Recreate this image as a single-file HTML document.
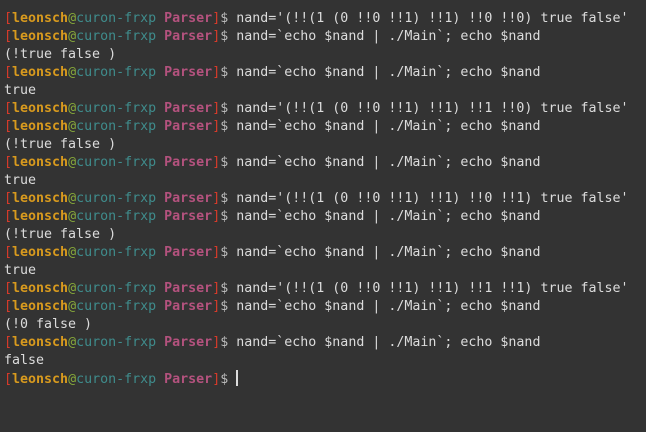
<html><head><style>
body{margin:0;background:#333333;width:646px;height:432px;overflow:hidden}
pre{margin:0;padding:10px 0 0 4px;font-family:"DejaVu Sans Mono",monospace;font-size:13.3px;line-height:18px;color:#dcdcdc}
.r{color:#d63a2a}.u{color:#d89a1e;font-weight:bold}.a{color:#86a83a}.h{color:#3f8c8c}.p{color:#b4527e;font-weight:bold}.d{color:#bbb}
.cur{display:inline-block;width:2px;height:16px;background:#ddd;vertical-align:-3px}
</style></head><body><pre><span class="r">[</span><span class="u">leonsch</span><span class="a">@</span><span class="h">curon-frxp</span> <span class="p">Parser</span><span class="r">]</span><span class="d">$</span> nand='(!!(1 (0 !!0 !!1) !!1) !!0 !!0) true false'
<span class="r">[</span><span class="u">leonsch</span><span class="a">@</span><span class="h">curon-frxp</span> <span class="p">Parser</span><span class="r">]</span><span class="d">$</span> nand=`echo $nand | ./Main`; echo $nand
(!true false )
<span class="r">[</span><span class="u">leonsch</span><span class="a">@</span><span class="h">curon-frxp</span> <span class="p">Parser</span><span class="r">]</span><span class="d">$</span> nand=`echo $nand | ./Main`; echo $nand
true
<span class="r">[</span><span class="u">leonsch</span><span class="a">@</span><span class="h">curon-frxp</span> <span class="p">Parser</span><span class="r">]</span><span class="d">$</span> nand='(!!(1 (0 !!0 !!1) !!1) !!1 !!0) true false'
<span class="r">[</span><span class="u">leonsch</span><span class="a">@</span><span class="h">curon-frxp</span> <span class="p">Parser</span><span class="r">]</span><span class="d">$</span> nand=`echo $nand | ./Main`; echo $nand
(!true false )
<span class="r">[</span><span class="u">leonsch</span><span class="a">@</span><span class="h">curon-frxp</span> <span class="p">Parser</span><span class="r">]</span><span class="d">$</span> nand=`echo $nand | ./Main`; echo $nand
true
<span class="r">[</span><span class="u">leonsch</span><span class="a">@</span><span class="h">curon-frxp</span> <span class="p">Parser</span><span class="r">]</span><span class="d">$</span> nand='(!!(1 (0 !!0 !!1) !!1) !!0 !!1) true false'
<span class="r">[</span><span class="u">leonsch</span><span class="a">@</span><span class="h">curon-frxp</span> <span class="p">Parser</span><span class="r">]</span><span class="d">$</span> nand=`echo $nand | ./Main`; echo $nand
(!true false )
<span class="r">[</span><span class="u">leonsch</span><span class="a">@</span><span class="h">curon-frxp</span> <span class="p">Parser</span><span class="r">]</span><span class="d">$</span> nand=`echo $nand | ./Main`; echo $nand
true
<span class="r">[</span><span class="u">leonsch</span><span class="a">@</span><span class="h">curon-frxp</span> <span class="p">Parser</span><span class="r">]</span><span class="d">$</span> nand='(!!(1 (0 !!0 !!1) !!1) !!1 !!1) true false'
<span class="r">[</span><span class="u">leonsch</span><span class="a">@</span><span class="h">curon-frxp</span> <span class="p">Parser</span><span class="r">]</span><span class="d">$</span> nand=`echo $nand | ./Main`; echo $nand
(!0 false )
<span class="r">[</span><span class="u">leonsch</span><span class="a">@</span><span class="h">curon-frxp</span> <span class="p">Parser</span><span class="r">]</span><span class="d">$</span> nand=`echo $nand | ./Main`; echo $nand
false
<span class="r">[</span><span class="u">leonsch</span><span class="a">@</span><span class="h">curon-frxp</span> <span class="p">Parser</span><span class="r">]</span><span class="d">$</span> <span class="cur"></span></pre></body></html>
